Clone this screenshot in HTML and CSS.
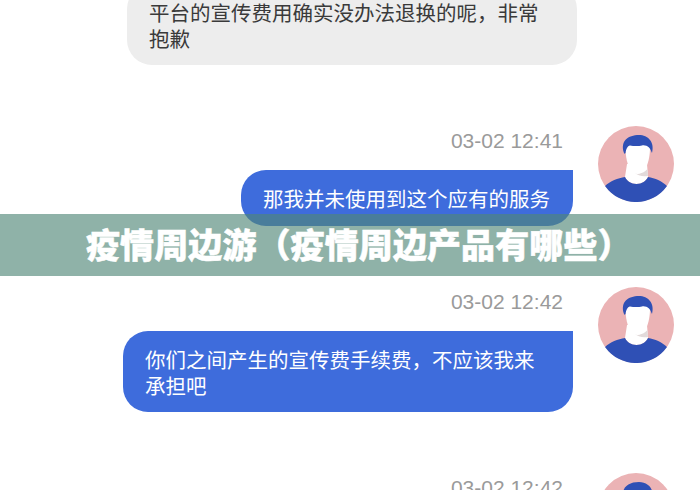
FILE: index.html
```html
<!DOCTYPE html>
<html>
  <head>
    <title>疫情周边游（疫情周边产品有哪些）</title>
    <link rel="stylesheet" href="styles.css">
  </head>
  <body>
    <!-- avatar used by every message on the right -->
    <svg class="defs">
      <symbol id="avatar" viewBox="0 0 76 76">
        <circle cx="38" cy="38" r="38" fill="#ebb3b5"/>
        <path d="M29 38 L27 51 C29 55 33 58 38.5 58 C44 58 48 55 50 51 L49 38Z" fill="#fff"/>
        <path d="M36 46 C41 49 46 47 49.5 43 L50 50 C45 51 40 50 36 46Z" fill="#e2dada"/>
        <path d="M27.5 18 L52 18 C52.5 34 48 48 39.5 48 C31 48 27 34 27.5 18Z" fill="#fff"/>
        <path d="M7 60 C12 55 20 52 27 51 C29 55 33 58 38.5 58 C44 58 48 55 50 51 C57 52 64 55 69 60 A38 38 0 0 1 7 60Z" fill="#2f50b5"/>
        <path d="M26 27 C22 15 30 9 41 9 C50 9 57 16 54 27 C53 25 52.5 23 51 21.5 C49 19.5 46 19 44 19.5 C40 20.5 35 20 32 19.5 C29.5 20 28 23 27.5 27 C27 28 26.3 28 26 27Z" fill="#2f50b5"/>
      </symbol>
    </svg>

    <div id="chat">
      <div class="bubble grey">平台的宣传费用确实没办法退换的呢，非常抱歉</div>

      <div class="msg">
        <div class="msg-body">
          <div class="time">03-02 12:41</div>
          <div class="bubble blue">那我并未使用到这个应有的服务</div>
        </div>
        <svg class="avatar"><use href="#avatar"/></svg>
      </div>

      <div class="msg">
        <div class="msg-body">
          <div class="time">03-02 12:42</div>
          <div class="bubble blue wide">你们之间产生的宣传费手续费，不应该我来承担吧</div>
        </div>
        <svg class="avatar"><use href="#avatar"/></svg>
      </div>

      <div class="msg">
        <div class="msg-body">
          <div class="time">03-02 12:42</div>
        </div>
        <svg class="avatar"><use href="#avatar"/></svg>
      </div>
    </div>

    <div id="banner">疫情周边游（疫情周边产品有哪些）</div>
  </body>
</html>
```

FILE: styles.css
```css
body {
  margin: 0;
  height: 490px;
  background: #fff;
  overflow: hidden;
  position: relative;
  font-family: "Liberation Sans", "Noto Sans CJK SC", sans-serif;
}

.defs {
  display: none;
}

/* the screenshot is cut from a longer chat, so the list starts above the frame */
#chat {
  display: flex;
  flex-direction: column;
  height: 506px;
  overflow: hidden;
  margin-top: -16px;
  padding-left: 127px;
  padding-right: 26px;
}

.bubble {
  font-family: "Noto Sans CJK SC", sans-serif;
  font-size: 20.5px;
  line-height: 26px;
  box-sizing: border-box;
}

.grey {
  width: 450px;
  flex-shrink: 0;
  padding: 15px 20px 14px 22px;
  background: #ededed;
  color: #3a3a3a;
  border-radius: 25px;
}

.blue {
  padding: 15px 23px 15px 22px;
  background: #3e6cdc;
  color: #fff;
  border-radius: 25px 0 25px 25px;
}

.wide {
  width: 450px;
  padding-bottom: 14px;
}

.msg {
  display: flex;
  flex-shrink: 0;
  justify-content: flex-end;
  gap: 25px;
  margin-top: 61px;
}

.msg-body {
  display: flex;
  flex-direction: column;
  align-items: flex-end;
}

.time {
  font-size: 21px;
  line-height: 28px;
  color: #9a9a9a;
  margin: 1px 10px 15px 0;
}

.avatar {
  width: 76px;
  height: 76px;
  flex-shrink: 0;
  filter: blur(0.4px);
}

#banner {
  position: absolute;
  left: 0;
  right: 0;
  top: 214px;
  height: 62px;
  line-height: 59px;
  padding-left: 86px;
  background: rgba(80, 134, 119, 0.64);
  color: #fff;
  font-family: "Noto Sans CJK SC", sans-serif;
  font-weight: 900;
  font-size: 34px;
  letter-spacing: 0.1px;
  -webkit-text-stroke: 0.5px #fff;
  white-space: nowrap;
}
```
